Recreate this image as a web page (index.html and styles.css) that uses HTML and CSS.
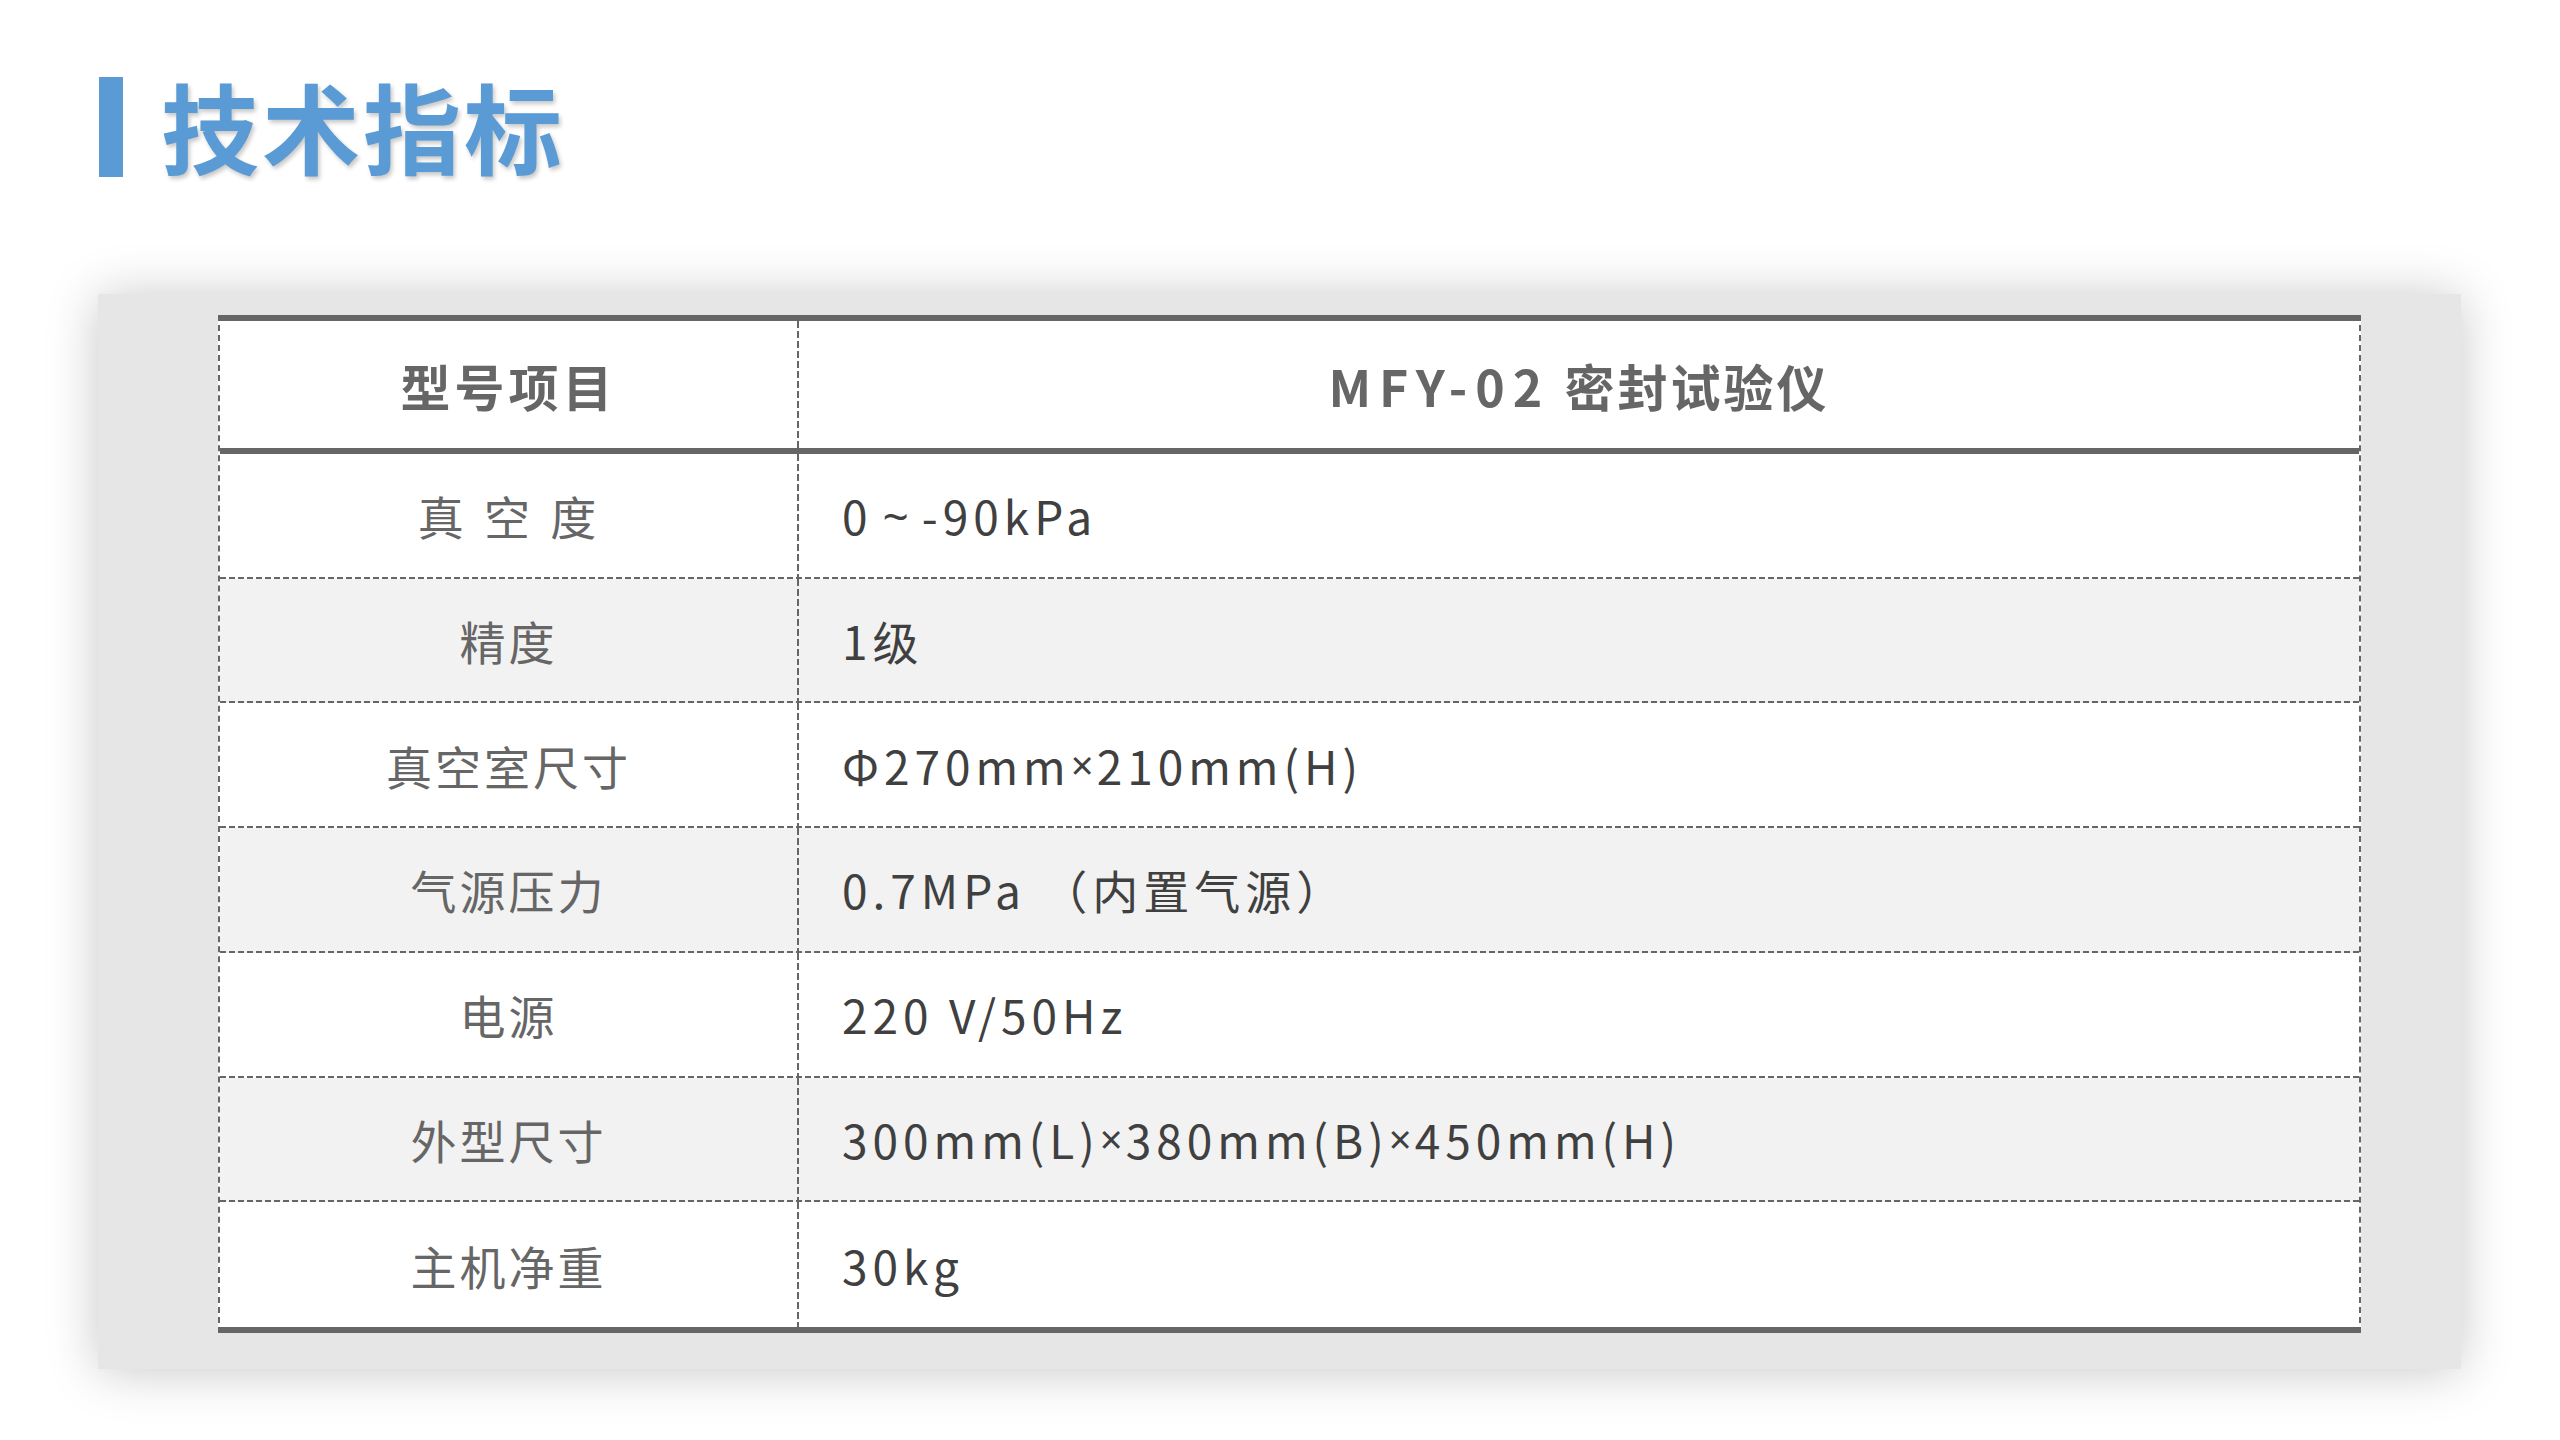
FILE: index.html
```html
<!DOCTYPE html>
<html lang="zh-CN">
<head>
<meta charset="utf-8">
<title>技术指标</title>
<link rel="stylesheet" href="styles.css">
</head>
<body>
<div class="page">
  <div class="title">
    <div class="title-bar"></div>
    <h1 class="title-text">技术指标</h1>
  </div>
  <div class="card">
    <div class="spec">
      <div class="row head">
        <div class="cell label">型号项目</div>
        <div class="cell value-head"><span class="latin">MFY-02</span> 密封试验仪</div>
      </div>
      <div class="rows">
        <div class="row">
          <div class="cell label spaced">真 空 度</div>
          <div class="cell value">0<span class="tilde">~</span>-90kPa</div>
        </div>
        <div class="row alt">
          <div class="cell label">精度</div>
          <div class="cell value">1级</div>
        </div>
        <div class="row">
          <div class="cell label">真空室尺寸</div>
          <div class="cell value">Φ270mm<span class="times">×</span>210mm(H)</div>
        </div>
        <div class="row alt">
          <div class="cell label">气源压力</div>
          <div class="cell value">0.7MPa （内置气源）</div>
        </div>
        <div class="row">
          <div class="cell label">电源</div>
          <div class="cell value">220 V/50Hz</div>
        </div>
        <div class="row alt">
          <div class="cell label">外型尺寸</div>
          <div class="cell value">300mm(L)<span class="times">×</span>380mm(B)<span class="times">×</span>450mm(H)</div>
        </div>
        <div class="row last">
          <div class="cell label">主机净重</div>
          <div class="cell value">30kg</div>
        </div>
      </div>
    </div>
  </div>
</div>
</body>
</html>
```

FILE: styles.css
```css
html, body {
  margin: 0;
  padding: 0;
  background: #ffffff;
}

body {
  width: 2560px;
  height: 1440px;
  overflow: hidden;
  font-family: "Noto Sans CJK SC", "Microsoft YaHei", "Noto Sans", sans-serif;
}

.page {
  padding: 77px 99px 0 98px;
}

.title {
  display: flex;
  align-items: center;
  gap: 38px;
  height: 100px;
}

.title-bar {
  width: 24px;
  height: 100px;
  background: #5b9bd5;
  margin-left: 1px;
}

.title-text {
  margin: 0 0 6px 0;
  font-size: 98px;
  line-height: 100px;
  font-weight: 700;
  letter-spacing: 3px;
  color: #5b9bd5;
  text-shadow: 2px 3px 4px rgba(0, 0, 0, 0.22);
}

.card {
  margin-top: 117px;
  background: #e6e6e6;
  padding: 21px 100px 36px 120px;
  box-shadow: 0 2px 48px rgba(0, 0, 0, 0.22);
}

.spec {
  background: #ffffff;
  border-top: 6px solid #666666;
  border-bottom: 6px solid #666666;
  border-left: 2px dashed #666666;
  border-right: 2px dashed #666666;
}

.row {
  display: grid;
  grid-template-columns: 579px 1fr;
  box-sizing: border-box;
  border-bottom: 2px solid #666666;
  border-image: repeating-linear-gradient(90deg, #666666 0 6px, transparent 6px 9px) 0 0 2 0;
}

.row.alt {
  background: #f2f2f2;
}

.row.last {
  border-bottom: none;
  border-image: none;
}

.row.head {
  height: 133px;
  border-bottom: 6px solid #666666;
  border-image: none;
}

.rows {
  display: grid;
  grid-template-rows: repeat(7, 1fr);
  height: 873px;
}

.cell {
  display: flex;
  align-items: center;
  box-sizing: border-box;
}

.cell.label {
  justify-content: center;
  border-right: 2px solid #666666;
  border-image: repeating-linear-gradient(180deg, #666666 0 7px, transparent 7px 10px) 0 2 0 0;
  font-size: 46px;
  letter-spacing: 3px;
  color: #666666;
  white-space: pre;
}

.cell.label.spaced {
  word-spacing: 4px;
}

.head .cell.label {
  font-size: 50px;
  font-weight: 700;
  letter-spacing: 4px;
}

.cell.value-head {
  justify-content: center;
  font-size: 50px;
  font-weight: 700;
  letter-spacing: 3px;
  color: #666666;
  white-space: pre;
}

.value-head .latin {
  letter-spacing: 8px;
}

.cell.value {
  padding-left: 43px;
  font-size: 46px;
  letter-spacing: 5px;
  color: #404040;
  white-space: pre;
}

.tilde {
  font-family: "Noto Sans", "DejaVu Sans", sans-serif;
  margin: 0 8px 0 10px;
}

.times {
  font-family: "Noto Sans", "DejaVu Sans", sans-serif;
  font-size: 40px;
  letter-spacing: 3px;
}
```
